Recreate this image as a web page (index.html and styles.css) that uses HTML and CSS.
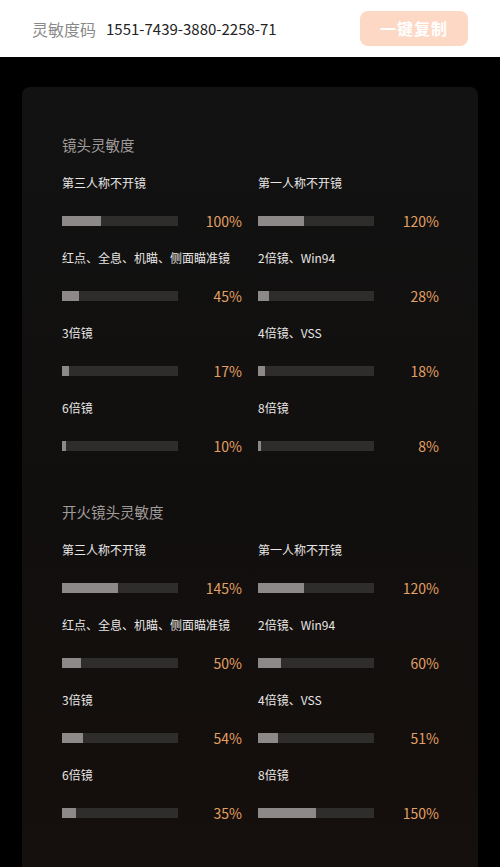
FILE: index.html
```html
<!DOCTYPE html>
<html lang="zh-CN">
<head>
<meta charset="utf-8">
<title>灵敏度码</title>
<link rel="stylesheet" href="styles.css">
</head>
<body>
<header class="top">
  <span class="code-label">灵敏度码</span>
  <span class="code">1551-7439-3880-2258-71</span>
  <button class="copy">一键复制</button>
</header>
<main class="page">
  <section class="card">
    <div class="group">
      <h2 class="group-title">镜头灵敏度</h2>
      <div class="grid">
        <div class="item"><div class="label">第三人称不开镜</div><div class="row"><div class="bar"><div class="fill" style="width:33.3%"></div></div><span class="pct">100%</span></div></div>
        <div class="item"><div class="label">第一人称不开镜</div><div class="row"><div class="bar"><div class="fill" style="width:40%"></div></div><span class="pct">120%</span></div></div>
        <div class="item"><div class="label">红点、全息、机瞄、侧面瞄准镜</div><div class="row"><div class="bar"><div class="fill" style="width:15%"></div></div><span class="pct">45%</span></div></div>
        <div class="item"><div class="label">2倍镜、Win94</div><div class="row"><div class="bar"><div class="fill" style="width:9.3%"></div></div><span class="pct">28%</span></div></div>
        <div class="item"><div class="label">3倍镜</div><div class="row"><div class="bar"><div class="fill" style="width:5.7%"></div></div><span class="pct">17%</span></div></div>
        <div class="item"><div class="label">4倍镜、VSS</div><div class="row"><div class="bar"><div class="fill" style="width:6%"></div></div><span class="pct">18%</span></div></div>
        <div class="item"><div class="label">6倍镜</div><div class="row"><div class="bar"><div class="fill" style="width:3.3%"></div></div><span class="pct">10%</span></div></div>
        <div class="item"><div class="label">8倍镜</div><div class="row"><div class="bar"><div class="fill" style="width:2.7%"></div></div><span class="pct">8%</span></div></div>
      </div>
    </div>
    <div class="group">
      <h2 class="group-title">开火镜头灵敏度</h2>
      <div class="grid">
        <div class="item"><div class="label">第三人称不开镜</div><div class="row"><div class="bar"><div class="fill" style="width:48.3%"></div></div><span class="pct">145%</span></div></div>
        <div class="item"><div class="label">第一人称不开镜</div><div class="row"><div class="bar"><div class="fill" style="width:40%"></div></div><span class="pct">120%</span></div></div>
        <div class="item"><div class="label">红点、全息、机瞄、侧面瞄准镜</div><div class="row"><div class="bar"><div class="fill" style="width:16.7%"></div></div><span class="pct">50%</span></div></div>
        <div class="item"><div class="label">2倍镜、Win94</div><div class="row"><div class="bar"><div class="fill" style="width:20%"></div></div><span class="pct">60%</span></div></div>
        <div class="item"><div class="label">3倍镜</div><div class="row"><div class="bar"><div class="fill" style="width:18%"></div></div><span class="pct">54%</span></div></div>
        <div class="item"><div class="label">4倍镜、VSS</div><div class="row"><div class="bar"><div class="fill" style="width:17%"></div></div><span class="pct">51%</span></div></div>
        <div class="item"><div class="label">6倍镜</div><div class="row"><div class="bar"><div class="fill" style="width:11.7%"></div></div><span class="pct">35%</span></div></div>
        <div class="item"><div class="label">8倍镜</div><div class="row"><div class="bar"><div class="fill" style="width:50%"></div></div><span class="pct">150%</span></div></div>
      </div>
    </div>
  </section>
</main>
</body>
</html>
```
FILE: styles.css
```css
* { box-sizing: border-box; }
html, body {
  margin: 0;
  padding: 0;
  background: #000;
  font-family: "Noto Sans CJK SC", "Noto Sans", sans-serif;
}
.top {
  height: 57px;
  background: #fff;
  display: flex;
  align-items: center;
  padding: 0 32px;
}
.code-label {
  font-size: 16px;
  color: #8a8a8a;
  margin-right: 10px;
}
.code {
  font-size: 15px;
  color: #222;
  flex: 1;
}
.copy {
  width: 108px;
  height: 35px;
  border: none;
  border-radius: 8px;
  background: #fdd8c5;
  color: #fff;
  font-family: inherit;
  font-size: 16px;
  font-weight: bold;
  letter-spacing: 1px;
  margin-top: -1px;
}
.page {
  padding: 30px 22px 0;
}
.card {
  background: linear-gradient(180deg, #121212 0%, #110f0e 55%, #150f0d 100%);
  border-radius: 8px 8px 0 0;
  padding: 48px 39px 40px 40px;
  min-height: 790px;
}
.group + .group {
  margin-top: 46px;
}
.group-title {
  margin: 0 0 19px;
  font-size: 14.5px;
  line-height: 20px;
  font-weight: normal;
  color: #a09c9a;
}
.grid {
  display: grid;
  grid-template-columns: 180px 181px;
  column-gap: 16px;
  row-gap: 18px;
}
.item {
  display: flex;
  flex-direction: column;
  gap: 19px;
}
.label {
  font-size: 12px;
  line-height: 18px;
  color: #e8e6e4;
  white-space: nowrap;
}
.row {
  display: flex;
  align-items: center;
  justify-content: space-between;
  height: 20px;
}
.bar {
  width: 116px;
  height: 10px;
  background: #2f2d2c;
}
.fill {
  height: 100%;
  background: #8e8989;
}
.pct {
  font-size: 14px;
  line-height: 20px;
  color: #e3a064;
}
```
